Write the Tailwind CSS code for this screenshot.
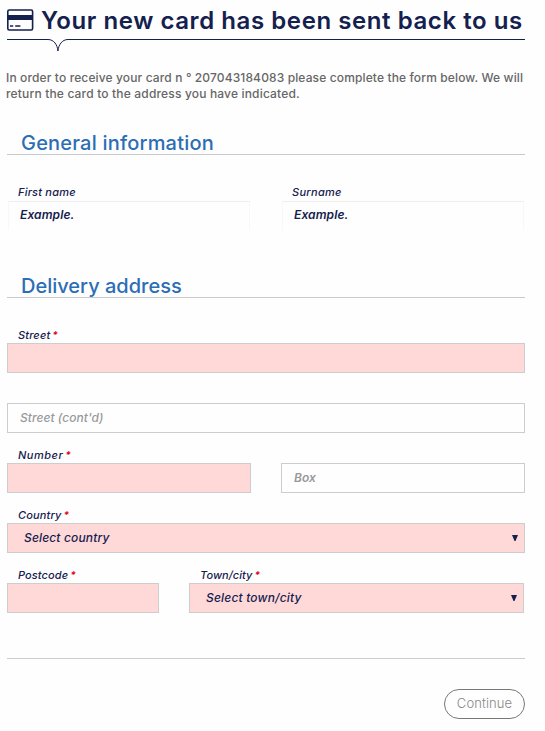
<!DOCTYPE html>
<html lang="en">
<head>
<meta charset="utf-8">
<title>Your new card has been sent back to us</title>
<script src="https://cdn.jsdelivr.net/npm/@tailwindcss/browser@4"></script>
</head>
<body class="bg-[#fefefe] font-['Inter','Noto_Sans',sans-serif] text-[#14204e]">
<main class="ml-[7px] flex h-[731px] w-[518px] flex-col whitespace-nowrap">
  <header class="flex h-[39px] shrink-0 items-start">
    <svg class="mt-[9px] shrink-0" width="27" height="22" viewBox="0 0 27 22" fill="none"><rect x=".8" y="1" width="24.8" height="20" rx="1.5" stroke="#14204e" stroke-width="1.6"/><path d="M1 6h24.5v5H1z" fill="#14204e"/><path d="M3 17h3.2M8.2 17h5.2" stroke="#14204e" stroke-width="1.5"/></svg>
    <h1 class="ml-[7px] mt-[6px] text-[24px] leading-[30px] font-semibold tracking-[0.57px]">Your new card has been sent back to us</h1>
  </header>
  <svg class="shrink-0" width="518" height="13" viewBox="0 0 518 13" fill="none" stroke="#14204e"><path d="M0 .5H41C47 .5 50.5 6 50.9 12C51.5 6 55 .5 61 .5H518"/></svg>
  <p class="-ml-px mt-[18px] h-[32px] shrink-0 text-[12px] leading-[16px] font-medium tracking-[0.13px] text-[#666]">In order to receive your card n ° 207043184083 please complete the form below. We will<br><span class="tracking-[0.17px]">return the card to the address you have indicated.</span></p>

  <h2 class="mt-[29px] h-[24px] shrink-0 border-b border-[#c8cbcb] pl-[14px] text-[20px] leading-[24px] font-medium tracking-[0.2px] text-[#2c6db5]">General information</h2>
  <section class="mt-[29px] grid shrink-0 grid-cols-2 gap-[30px]">
    <div><div class="h-[17px] pl-[11px] text-[11px] leading-[17px] font-medium italic tracking-[0.2px]">First name</div><div class="mx-px h-[29px] border border-b-0 border-t-[#eee] border-x-[#f8f8f8] pl-[11px] text-[12px] leading-[26px] font-semibold italic tracking-[0.1px]">Example.</div></div>
    <div><div class="h-[17px] pl-[11px] text-[11px] leading-[17px] font-medium italic tracking-[0.3px]">Surname</div><div class="mx-px h-[29px] border border-b-0 border-t-[#eee] border-x-[#f8f8f8] pl-[11px] text-[12px] leading-[26px] font-semibold italic tracking-[0.1px]">Example.</div></div>
  </section>

  <h2 class="mt-[44px] h-[24px] shrink-0 border-b border-[#c8cbcb] pl-[14px] text-[20px] leading-[24px] font-medium text-[#2c6db5]">Delivery address</h2>
  <section class="mt-[29px] flex shrink-0 flex-col">
    <div class="h-[16px] pl-[11px] text-[11px] leading-[17px] font-medium italic tracking-[0.15px]">Street<span class="ml-[2px] text-[10px] leading-none font-bold text-[#e4001f]">*</span></div>
    <div class="h-[30px] border border-[#cdcdcd] bg-[#ffd8d8]"></div>
    <div class="mt-[30px] h-[30px] border border-[#cdcdcd] pl-[12px] text-[12px] leading-[28px] font-medium italic tracking-[0.05px] text-[#999]">Street (cont'd)</div>
    <div class="mt-[14px] grid grid-cols-2 items-end gap-[30px]">
      <div><div class="h-[16px] pl-[11px] text-[11px] leading-[17px] font-medium italic tracking-[0.5px]">Number<span class="ml-[2px] text-[10px] leading-none font-bold text-[#e4001f]">*</span></div><div class="h-[30px] border border-[#cdcdcd] bg-[#ffd8d8]"></div></div>
      <div class="h-[30px] border border-[#cdcdcd] pl-[12px] text-[12px] leading-[28px] font-semibold italic text-[#999]">Box</div>
    </div>
    <div class="mt-[14px] h-[16px] pl-[11px] text-[11px] leading-[17px] font-medium italic tracking-[0.15px]">Country<span class="ml-[2px] text-[10px] leading-none font-bold text-[#e4001f]">*</span></div>
    <div class="flex h-[30px] items-center justify-between border border-[#cdcdcd] bg-[#ffd8d8] pl-[16px] pr-[6px] text-[12px] font-medium italic tracking-[0.15px]"><span>Select country</span><svg width="6" height="6" viewBox="0 0 6 6"><path d="M0 0h6L3.5 6h-1z" fill="#14204e"/></svg></div>
    <div class="mt-[14px] flex gap-[30px]">
      <div class="w-[152px]"><div class="h-[16px] pl-[11px] text-[11px] leading-[17px] font-medium italic tracking-[0.1px]">Postcode<span class="ml-[2px] text-[10px] leading-none font-bold text-[#e4001f]">*</span></div><div class="h-[30px] border border-[#cdcdcd] bg-[#ffd8d8]"></div></div>
      <div class="w-[335px]"><div class="h-[16px] pl-[11px] text-[11px] leading-[17px] font-medium italic tracking-[0.05px]">Town/city<span class="ml-[2px] text-[10px] leading-none font-bold text-[#e4001f]">*</span></div>
      <div class="flex h-[30px] items-center justify-between border border-[#cdcdcd] bg-[#ffd8d8] pl-[16px] pr-[6px] text-[12px] font-medium italic tracking-[0.18px]"><span>Select town/city</span><svg width="6" height="6" viewBox="0 0 6 6"><path d="M0 0h6L3.5 6h-1z" fill="#14204e"/></svg></div></div>
    </div>
  </section>
  <footer class="mt-[45px] flex shrink-0 justify-end border-t border-[#cdcdcd] pt-[30px]">
    <button class="h-[30px] w-[81px] rounded-full border border-[#777] text-[13px] font-light tracking-[0.1px] text-[#888]">Continue</button>
  </footer>
</main>
</body>
</html>
